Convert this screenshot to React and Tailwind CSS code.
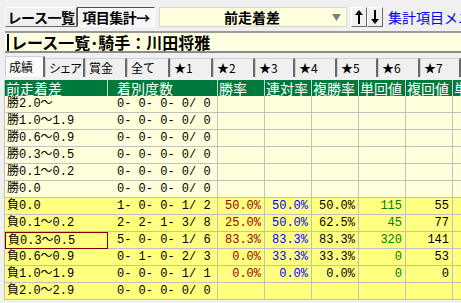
import React from "react";

const tabs = [
  ["成績", "w-[40px]"],
  ["シェア", "w-[40px]"],
  ["賞金", "w-[42px]"],
  ["全て", "w-[43px]"],
  ["★1", "w-[43px]"],
  ["★2", "w-[42px]"],
  ["★3", "w-[40px]"],
  ["★4", "w-[42px]"],
  ["★5", "w-[41px]"],
  ["★6", "w-[42px]"],
  ["★7", "flex-1"],
];

const headers = ["前走着差", "着別度数", "勝率", "連対率", "複勝率", "単回値", "複回値", "単"];

const rows = [
  ["勝2.0～", "0- 0- 0- 0/ 0"],
  ["勝1.0～1.9", "0- 0- 0- 0/ 0"],
  ["勝0.6～0.9", "0- 0- 0- 0/ 0"],
  ["勝0.3～0.5", "0- 0- 0- 0/ 0"],
  ["勝0.1～0.2", "0- 0- 0- 0/ 0"],
  ["勝0.0", "0- 0- 0- 0/ 0"],
  ["負0.0", "1- 0- 0- 1/ 2", "50.0%", "50.0%", "50.0%", "115", "55"],
  ["負0.1～0.2", "2- 2- 1- 3/ 8", "25.0%", "50.0%", "62.5%", "45", "77"],
  ["負0.3～0.5", "5- 0- 0- 1/ 6", "83.3%", "83.3%", "83.3%", "320", "141"],
  ["負0.6～0.9", "0- 1- 0- 2/ 3", "0.0%", "33.3%", "33.3%", "0", "53"],
  ["負1.0～1.9", "0- 0- 0- 1/ 1", "0.0%", "0.0%", "0.0%", "0", "0"],
  ["負2.0～2.9", "0- 0- 0- 0/ 0"],
];

const valueColors = ["text-[#990000]", "text-[#0000ff]", "text-black", "text-[#008000]", "text-black"];

const grid = "grid grid-cols-[103px_110px_47px_47px_47px_47px_47px_1fr]";

function RaisedButton({ children, className = "" }) {
  return (
    <div
      className={`shrink-0 h-[20px] flex items-center justify-center bg-[#f0f0f0] border border-t-white border-l-white border-r-[#6a6a6a] border-b-[#6a6a6a] ${className}`}
    >
      {children}
    </div>
  );
}

function Arrow({ down }) {
  return (
    <svg width="8" height="14" viewBox="0 0 8 14">
      <g transform={down ? "rotate(180 4 7)" : undefined}>
        <rect x="3" y="3" width="2" height="11" fill="#000" />
        <polygon points="4,0 8,5 0,5" fill="#000" />
      </g>
    </svg>
  );
}

export default function App() {
  return (
    <div className="w-[461px] h-[303px] overflow-hidden bg-[#f0f0f0] font-['Noto_Sans_CJK_JP',sans-serif] text-black">
      {/* top controls */}
      <div className="flex items-center pt-[7px] pl-[5px] h-[27px] whitespace-nowrap">
        <RaisedButton className="w-[72px] text-[14px] font-bold leading-none tracking-[-0.5px]">レース一覧</RaisedButton>
        <div className="shrink-0 w-[78px] h-[20px] flex items-center justify-center bg-[#f7f7f7] border border-t-[#505050] border-l-[#505050] border-r-white border-b-white text-[14px] font-bold leading-none tracking-[-0.5px]">
          項目集計→
        </div>
        <div className="shrink-0 ml-[4px] w-[188px] h-[20px] flex items-center bg-[#ffffe0] border border-[#d8d8d8] relative">
          <span className="flex-1 text-center text-[14px] font-bold leading-none pr-[2px]">前走着差</span>
          <svg width="9" height="7" viewBox="0 0 9 7" className="absolute left-[172px] top-[6px]">
            <polygon points="0,0 9,0 4.5,7" fill="#808080" />
          </svg>
        </div>
        <RaisedButton className="ml-[4px] w-[16px]">
          <Arrow />
        </RaisedButton>
        <RaisedButton className="w-[16px]">
          <Arrow down />
        </RaisedButton>
        <span className="shrink-0 ml-[5px] text-[14px] leading-none text-[#0000ee]">集計項目メニュー</span>
      </div>

      {/* title */}
      <div className="mt-[4px] ml-[5px] h-[22px] bg-[#ffffe0] border-t-2 border-b-2 border-t-[#9a9a9a] border-b-[#8a8a8a] flex items-center">
        <div className="ml-[2px] h-[17px] border-l-2 border-black flex items-center pl-[2px] text-[16px] font-bold leading-none whitespace-nowrap">
          レース一覧･騎手：川田将雅
        </div>
      </div>

      {/* tabs */}
      <div className="mt-[3px] ml-[5px] h-[21px] flex items-end">
        {tabs.map(([label, w], i) => (
          <div
            key={label}
            className={`${w} shrink-0 ${
              i === 0 ? "h-[21px] bg-[#fbfbfb]" : "h-[19px] bg-[#f0f0f0]"
            } flex items-center pl-[3px] text-[12px] leading-none whitespace-nowrap overflow-hidden ${
              i === 1 ? "tracking-[-1.5px]" : ""
            } border-t border-l border-t-[#d0d0d0] border-l-[#d0d0d0] border-r-2 border-r-[#6a6a6a]`}
          >
            {label}
          </div>
        ))}
      </div>

      {/* table */}
      <div className="mt-[3px] ml-[4px] border-l border-[#c0c0c0] font-['Liberation_Mono','Noto_Sans_CJK_JP',monospace]">
        <div className={`${grid} h-[16px] bg-[#007a3c] text-white font-['Noto_Sans_CJK_JP',sans-serif] text-[14px] leading-[16px]`}>
          {headers.map((h, i) => (
            <div
              key={h}
              className={`whitespace-nowrap ${i === 1 ? "pl-[9px]" : "pl-[1px]"} ${
                i < 7 ? "border-r border-[#c8d8c8]" : ""
              }`}
            >
              {h}
            </div>
          ))}
        </div>
        {rows.map((r, ri) => {
          const bg = ri < 6 ? "bg-[#ffffdc]" : "bg-[#ffff80]";
          const focus = ri === 8;
          return (
            <div key={ri} className={`${grid} h-[17px] ${bg} text-[12px] leading-none`}>
              <div
                className={`flex items-center pl-[2px] whitespace-pre border-b ${
                  focus ? "border border-[#7a0000]" : "border-[#c0c0c0]"
                }`}
              >
                {r[0]}
              </div>
              <div className="flex items-center pl-[9px] whitespace-pre border-r border-b border-[#c0c0c0]">
                {r[1]}
              </div>
              {[0, 1, 2, 3, 4].map((k) => (
                <div
                  key={k}
                  className={`flex items-center justify-end pr-[3px] whitespace-pre border-r border-b border-[#c0c0c0] ${valueColors[k]}`}
                >
                  {r[k + 2] || ""}
                </div>
              ))}
              <div className="border-b border-[#c0c0c0]" />
            </div>
          );
        })}
      </div>
    </div>
  );
}
